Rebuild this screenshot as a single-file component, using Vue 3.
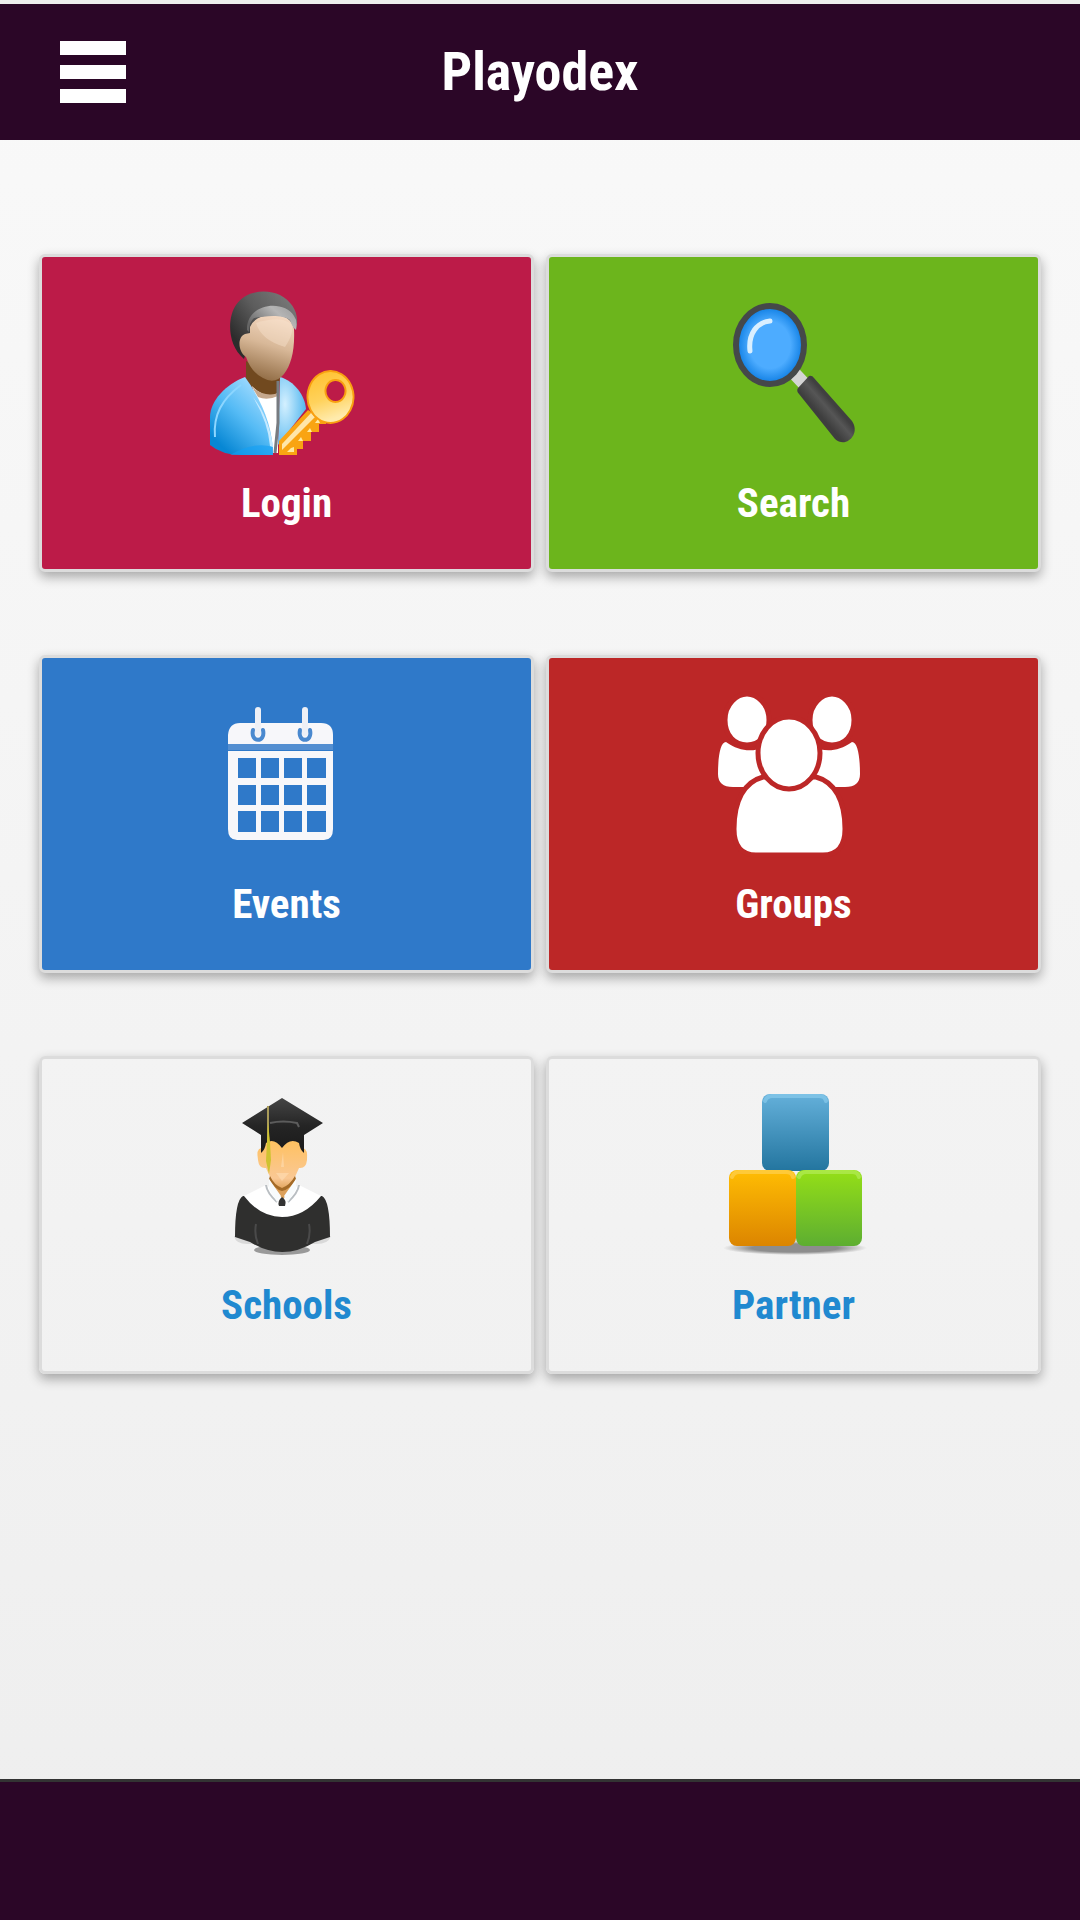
<template>
  <div class="page">
    <header class="top-bar">
      <button class="menu-btn" type="button" aria-label="Menu">
        <span></span>
        <span></span>
        <span></span>
      </button>
      <h1 class="title">Playodex</h1>
    </header>

    <main class="tiles">
      <a v-for="t in tiles" :key="t.id" href="#" class="tile" :class="t.id">
        <!-- user with key -->
        <svg v-if="t.id === 'login'" class="icon" viewBox="0 0 144 164" aria-hidden="true">
          <defs>
            <linearGradient id="hair" x1="0" y1="0.6" x2="0.8" y2="0">
              <stop offset="0" stop-color="#2c2c2c" />
              <stop offset="0.5" stop-color="#5c5c5c" />
              <stop offset="1" stop-color="#777" />
            </linearGradient>
            <linearGradient id="fringe" x1="0" y1="0.6" x2="1" y2="0">
              <stop offset="0" stop-color="#666" />
              <stop offset="0.6" stop-color="#b5b5b5" />
              <stop offset="1" stop-color="#999" />
            </linearGradient>
            <linearGradient id="face" x1="0.65" y1="0" x2="0.4" y2="1">
              <stop offset="0" stop-color="#f5d9c2" />
              <stop offset="0.45" stop-color="#d8b898" />
              <stop offset="1" stop-color="#8f6a42" />
            </linearGradient>
            <linearGradient id="coat" x1="0.8" y1="0.1" x2="0.2" y2="0.9">
              <stop offset="0" stop-color="#a3dcff" />
              <stop offset="0.5" stop-color="#55bbf5" />
              <stop offset="1" stop-color="#0787d4" />
            </linearGradient>
            <radialGradient id="sleeve" cx="0.25" cy="0.4" r="0.8">
              <stop offset="0" stop-color="#d4f0ff" />
              <stop offset="1" stop-color="#4bb3ee" />
            </radialGradient>
            <linearGradient id="key" x1="0" y1="0" x2="0.3" y2="1">
              <stop offset="0" stop-color="#ffc02b" />
              <stop offset="0.6" stop-color="#ffd25c" />
              <stop offset="1" stop-color="#ffebad" />
            </linearGradient>
          </defs>
          <path d="M36 70v18l14 20h18l2-22z" fill="#71491f" />
          <path d="M42 95q14 14 26 7v60h-7z" fill="#fff" />
          <path d="M42 96q13 11 26 6v3q-11 5-20 1z" fill="#c5a78c" />
          <path d="M35 86C16 93 0 110 0 126v28q12 10 32 10h31C63 138 53 111 35 86z" fill="url(#coat)" />
          <path d="M20 164q24-14 43-8v8z" fill="#12a0f5" opacity="0.6" />
          <path d="M60 155q-2-24-17-49 16 20 20 50z" fill="#c5e9ff" />
          <path d="M70 86C84 90 95 104 96 118l-28 36z" fill="url(#sleeve)" />
          <path d="M68 90v42l-3 30" fill="none" stroke="#777b80" stroke-width="3" />
          <path d="M5 146c-2-22 7-38 26-52" fill="none" stroke="#8cd6ff" stroke-width="2" />
          <path d="M34 68C16 53 18 25 26 14 36-1 57-2 70 4c11 6 18 16 17 28q-1 6-4 5L66 27 43 37z" fill="url(#hair)" />
          <path d="M40 36Q45 24 63 24q18 0 21 14c1 22-3 36-10 45q-9 11-21 4Q41 81 36 66c-8-5-9-20-1-23l5-1z" fill="url(#face)" />
          <path d="M37 39c-1-27 37-31 47-14q4 5 2 14-4-3-6-10c-8-6-25-4-36-2q-5 4-5 14z" fill="url(#fringe)" />
          <path d="M46 32q5 17 29 24 10-15 6-23-10-9-35-1z" fill="#fbe5d3" opacity="0.4" />
          <path d="M98 119l-29 31v14h18v-6h6v-8h8v-9h8v-8h7v-7h-7z" fill="#f9a412" />
          <path d="M101 122l-29 31v6l33-33z" fill="#ffe6a8" />
          <path d="M81 157l-4 4h7v-5zM91 146l-3 4h5zM100 137l-3 4h5zM108 128l-3 4h5z" fill="#ffe9a0" />
          <path
            d="M120 80a23 26 0 1 0 1 0zM126 89a10 11 0 1 1-1 0z"
            fill="url(#key)"
            fill-rule="evenodd"
            stroke="#f9a010"
            stroke-width="2"
          />
        </svg>

        <!-- magnifier -->
        <svg v-else-if="t.id === 'search'" class="icon" viewBox="0 0 144 164" aria-hidden="true">
          <defs>
            <radialGradient id="lens">
              <stop offset="0.6" stop-color="#4dacff" />
              <stop offset="1" stop-color="#0c7ce2" />
            </radialGradient>
            <linearGradient id="handle" x1="0" y1="1" x2="1" y2="0">
              <stop offset="0.4" stop-color="#3e3e3e" />
              <stop offset="0.52" stop-color="#565656" />
              <stop offset="0.6" stop-color="#404040" />
            </linearGradient>
          </defs>
          <path d="M77 82l14 15" stroke="#d5d5d5" stroke-width="13" />
          <ellipse cx="53" cy="54" rx="34" ry="39" fill="url(#lens)" stroke="#45484a" stroke-width="6" />
          <path d="M33 60C31 43 40 31 53 30" fill="none" stroke="#d9efff" stroke-width="5" stroke-linecap="round" />
          <path d="M81 97l11-12q3-1 5 2l38 43c9 13-6 28-17 18L82 103q-3-3-1-6z" fill="url(#handle)" />
        </svg>

        <!-- calendar -->
        <svg v-else-if="t.id === 'events'" class="icon" viewBox="0 0 144 164" aria-hidden="true">
          <path d="M18 52V43q1-12 12-12h81q12 0 12 12v9z" fill="#f7f7fa" />
          <path
            d="M18 59h105v78q0 11-9 11H27q-9 0-9-11zM28 66v20h18V66zM51 66v20h18V66zM74 66v20h18V66zM97 66v20h19V66zM28 93v20h18V93zM51 93v20h18V93zM74 93v20h18V93zM97 93v20h19V93zM28 119v21h18v-21zM51 119v21h18v-21zM74 119v21h18v-21zM97 119v21h19v-21z"
            fill="#f7f7fa"
            fill-rule="evenodd"
          />
          <path d="M18 55h105" stroke="#548fd1" stroke-width="6" />
          <g v-for="x in [48, 95]" :key="x" fill="none" stroke-linecap="round">
            <path :d="`M${x - 5} 38c-3 13 13 13 10 0`" stroke="#4a89cf" stroke-width="4" />
            <path :d="`M${x} 18v23`" stroke="#eef0f6" stroke-width="6" />
          </g>
        </svg>

        <!-- people -->
        <svg v-else-if="t.id === 'groups'" class="icon" viewBox="0 0 144 164" aria-hidden="true">
          <g fill="#fff">
            <path d="M9 50c14 10 27 10 39 5v40H16Q1 95 1 82C1 66 3 50 9 50z" />
            <path d="M135 50c-14 10-27 10-39 5v40h32q15 0 15-13c0-16-2-32-8-32z" />
            <g stroke="#bc2727" stroke-width="5">
              <path d="M30 2c10 0 22 10 22 26S42 53 30 53 8 44 8 28 20 2 30 2z" />
              <path d="M115 2c10 0 22 10 22 26s-10 25-22 25-22-9-22-25S105 2 115 2z" />
              <path d="M46 85h53c19 5 29 24 29 52 0 18-9 26-22 26H39c-13 0-22-8-22-26 0-28 10-47 29-52z" />
              <ellipse cx="72" cy="61" rx="31" ry="36" />
            </g>
          </g>
        </svg>

        <!-- graduate -->
        <svg v-else-if="t.id === 'schools'" class="icon" viewBox="0 0 144 164" aria-hidden="true">
          <defs>
            <linearGradient id="skin" x1="0" y1="0" x2="0" y2="1">
              <stop offset="0" stop-color="#ffc058" />
              <stop offset="0.8" stop-color="#fac894" />
              <stop offset="1" stop-color="#e0a35c" />
            </linearGradient>
            <linearGradient id="mortar" x1="0" y1="0" x2="0" y2="1">
              <stop offset="0" stop-color="#454545" />
              <stop offset="0.5" stop-color="#252525" />
              <stop offset="1" stop-color="#191919" />
            </linearGradient>
          </defs>
          <path d="M24 143q2 9 16 8h64q14 1 17-8" fill="#d9d9d9" />
          <ellipse cx="72" cy="157" rx="28" ry="5" fill="#999" />
          <path d="M33 103q-8 4-8 41l15 5q32 20 65 0l15-5q0-37-8-41z" fill="#2f2f2e" />
          <path d="M46 131q-2 10 2 20M99 131q2 10-2 20" fill="none" stroke="#4a4a4a" stroke-width="2" />
          <path d="M34 103l22-11q16 12 33 0l22 11q-17 21-39 21t-38-21z" fill="#fff" />
          <path d="M56 92q1 8 11 17M89 92q-1 8-11 17" fill="none" stroke="#b9bec2" stroke-width="2" />
          <path d="M60 80h25v13L73 106 60 93z" fill="#dca05a" />
          <path d="M51 55q-5 1-3 12 1 9 8 8l4 9q4 9 12 12 8-3 13-12l4-9q7 1 8-8 1-11-4-12L85 42H59z" fill="url(#skin)" />
          <path d="M60 83q4 9 12 12 8-3 13-12l1 3q-5 10-14 12-8-2-13-12z" fill="#a56b27" />
          <path d="M73 59l-2 15h3zM66 80h13l-7 8z" fill="#ffe1bb" opacity="0.5" />
          <path d="M59 86l12 17-4 6-8-13zM86 86l-12 17 4 6 8-13z" fill="#f8fbfc" />
          <path d="M72 104q5 3 3 9h-6q-2-5 3-9z" fill="#333" />
          <path d="M72 5l41 25-19 12v18q-4-3-5-10-9-6-17 5-8-11-16-5-1 7-5 10V42L32 30z" fill="url(#mortar)" />
          <path d="M60 30q13-3 27 0l2 4" fill="none" stroke="#5c5c5c" stroke-width="2" />
          <path d="M58 13v38" stroke="#a99b59" stroke-width="2" />
          <path d="M58 29l2 20 1 18-2 14-3-13z" fill="#cfc230" />
        </svg>

        <!-- blocks -->
        <svg v-else class="icon" viewBox="0 0 144 164" aria-hidden="true">
          <defs>
            <linearGradient id="blue" x1="0" y1="0" x2="0" y2="1">
              <stop offset="0" stop-color="#64b0da" />
              <stop offset="1" stop-color="#23759f" />
            </linearGradient>
            <linearGradient id="orange" x1="0" y1="0" x2="0" y2="1">
              <stop offset="0" stop-color="#ffbd03" />
              <stop offset="1" stop-color="#dc8500" />
            </linearGradient>
            <linearGradient id="green" x1="0" y1="0" x2="0" y2="1">
              <stop offset="0" stop-color="#95df17" />
              <stop offset="1" stop-color="#5dae31" />
            </linearGradient>
            <radialGradient id="ground">
              <stop offset="0.6" stop-color="#8d8d8d" />
              <stop offset="1" stop-color="#8d8d8d" stop-opacity="0" />
            </radialGradient>
          </defs>
          <ellipse cx="78" cy="155" rx="72" ry="7" fill="url(#ground)" />
          <rect x="45" y="1" width="67" height="77" rx="8" fill="url(#blue)" />
          <rect x="12" y="77" width="67" height="76" rx="8" fill="url(#orange)" />
          <rect x="79" y="77" width="66" height="76" rx="8" fill="url(#green)" />
          <g fill="none" stroke-width="4" stroke-linecap="round" opacity="0.6">
            <path d="M48 8q2-5 7-5h47q6 0 7 5" stroke="#8fd0f0" />
            <path d="M15 84q2-5 7-5h47q6 0 7 5" stroke="#ffd45c" />
            <path d="M82 84q2-5 7-5h46q6 0 7 5" stroke="#b9ef63" />
          </g>
        </svg>

        <span class="label">{{ t.label }}</span>
      </a>
    </main>

    <footer class="bottom-bar"></footer>
  </div>
</template>

<script setup>
const tiles = [
  { id: 'login', label: 'Login' },
  { id: 'search', label: 'Search' },
  { id: 'events', label: 'Events' },
  { id: 'groups', label: 'Groups' },
  { id: 'schools', label: 'Schools' },
  { id: 'partner', label: 'Partner' },
]
</script>

<style>
body { margin: 0; }
</style>

<style scoped>
.page {
  box-sizing: border-box;
  min-height: 100vh;
  display: flex;
  flex-direction: column;
  border-top: 4px solid #eee;
  background: linear-gradient(#f9f9f9, #eee);
  font-family: 'Roboto Condensed', Roboto, 'Liberation Sans', sans-serif;
  font-weight: 700;
}

.top-bar {
  display: grid;
  grid-template-columns: 66px 1fr 66px;
  align-items: center;
  height: 136px;
  padding: 0 60px;
  background: #2b0627;
}
.menu-btn {
  display: flex;
  flex-direction: column;
  gap: 10px;
  padding: 0;
  border: 0;
  background: none;
}
.menu-btn span { height: 14px; background: #fff; }
.title { margin: 0; text-align: center; font-size: 54px; line-height: 64px; color: #fff; }

.tiles {
  flex: 1;
  display: grid;
  grid-template-columns: 1fr 1fr;
  align-content: start;
  gap: 83px 12px;
  padding: 114px 39px;
}
.tile {
  box-sizing: border-box;
  height: 318px;
  padding-top: 34px;
  display: flex;
  flex-direction: column;
  align-items: center;
  border: 3px solid #dcdcdc;
  border-radius: 6px;
  box-shadow: 0 5px 12px rgba(0, 0, 0, 0.32);
  color: #fff;
  text-decoration: none;
}
.icon { width: 144px; height: 164px; margin-right: 9px; overflow: visible; }
.label { margin-top: 24px; font-size: 41px; line-height: 48px; }

.login { background: #bc1b48; }
.search { background: #6cb51c; }
.events { background: #2f79c9; }
.groups { background: #bc2727; }
.schools, .partner { color: #2089d0; }

.bottom-bar { height: 138px; border-top: 3px solid #333; background: #2b0627; }
</style>
